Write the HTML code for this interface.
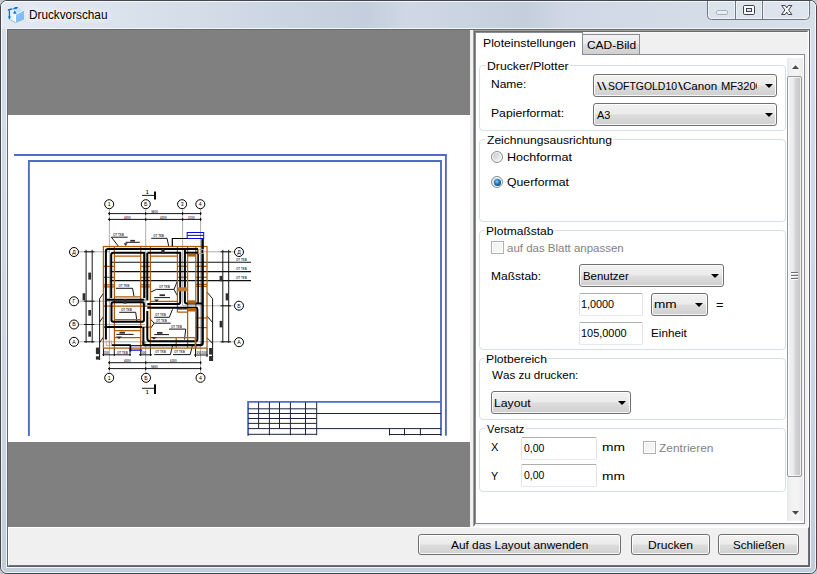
<!DOCTYPE html>
<html lang="de"><head><meta charset="utf-8"><title>Druckvorschau</title>
<style>
html,body{margin:0;padding:0}
body{width:817px;height:574px;overflow:hidden;position:relative;background:#c4c8cc;font:12px "Liberation Sans",sans-serif;color:#000;font-kerning:none}
div,span{box-sizing:border-box}
.a{position:absolute}
.t{position:absolute;white-space:nowrap;line-height:14px;height:14px;transform-origin:0 50%}
#win{left:0;top:0;width:817px;height:574px;border-radius:7px;border:1px solid #43484f;background:linear-gradient(180deg,#d6dfea 0,#d2dce8 120px,#cbd6e2 420px,#c2cdda 574px)}
#tbar{left:1px;top:1px;width:815px;height:28px;border-radius:6px 6px 0 0;background:linear-gradient(90deg,#e4eaf2 0,#dbe3ed 110px,#d3dce7 200px,#cad4e1 300px,#c4cedc 365px,#cfd8e4 405px,#cad4e0 470px,#c5cfdc 525px,#cfd8e4 565px,#d3dce7 700px,#d8e0ea 815px)}
#winhl{left:1px;top:1px;width:815px;height:572px;border-radius:6px;border:1px solid rgba(255,255,255,.75)}
#client{left:6px;top:28px;width:805px;height:540px;background:#f0f0f0;border:1px solid #f2f6fa}
#client2{left:7px;top:29px;width:803px;height:538px;border:1px solid #5c626b;border-top-color:#6a6a6a;border-left-color:#64686e}
#gray{left:8px;top:30px;width:462px;height:497px;background:#808080}
#paper{left:8px;top:115px;width:462px;height:327px;background:#fff}
#panel{left:473px;top:30px;width:336px;height:497px;background:#f0f0f0;border-left:1px solid #a0a0a0;border-top:1px solid #a0a0a0;border-right:1px solid #fff;border-bottom:1px solid #fff}
#panel2{left:474px;top:31px;width:334px;height:495px;border-left:1px solid #696969;border-top:1px solid #696969;border-right:1px solid #f4f4f4;border-bottom:1px solid #f4f4f4}
#tabbg{left:475px;top:32px;width:332px;height:493px;background:#f0f0f0;border-top:1px solid #fafafa}
#pane{left:475px;top:54px;width:330px;height:470px;background:#fff;border:1px solid #898c95}
#tab1{left:475px;top:32px;width:108px;height:23px;background:#fff;border:1px solid #898c95;border-bottom:none}
#tab1b{left:476px;top:54px;width:106px;height:2px;background:#fff}
#tab2{left:583px;top:34px;width:57px;height:20px;border:1px solid #898c95;border-left:none;border-bottom:none;background:linear-gradient(#f2f2f2 0,#ebebeb 49%,#dddddd 50%,#cfcfcf 100%)}
.grp{position:absolute;border:1px solid #d5dfe5;border-radius:4px}
.gl{position:absolute;background:#fff;height:3px}
.combo,.btn{position:absolute;border:1px solid #707070;border-radius:3px;background:linear-gradient(#f2f2f2 0,#ebebeb 48%,#dddddd 52%,#cfcfcf 100%);box-shadow:inset 0 0 0 1px rgba(255,255,255,.85)}
.ar{position:absolute;width:0;height:0;border-left:4px solid transparent;border-right:4px solid transparent;border-top:4px solid #000}
.inp{position:absolute;border-radius:1.5px;border:1px solid #e2e3ea;border-top-color:#abadb3;border-bottom-color:#e3e9ef;background:#fff}
.radio{position:absolute;width:12px;height:12px;border-radius:50%;border:1px solid #8a8b8c;background:linear-gradient(135deg,#c3cad1 10%,#dde1e5 50%,#f6f7f8 90%);box-shadow:inset 0 0 0 1px #fcfcfc}
.cbx{position:absolute;width:13px;height:13px;border:1px solid #b1b1b1;background:linear-gradient(135deg,#efefef,#f9f9f9);box-shadow:inset 0 0 0 1px #fdfdfd}
#sbtrack{left:787px;top:58px;width:16px;height:463px;background:linear-gradient(90deg,#e9e9e9 0,#f3f3f3 30%,#f3f3f3 70%,#eaeaea 100%)}
#sbthumb{left:787px;top:76px;width:15px;height:401px;border:1px solid #979797;border-radius:2px;background:linear-gradient(90deg,#f5f5f5 0,#e9e9eb 45%,#d5d5d8 55%,#c4c4c8 100%);box-shadow:inset 0 0 0 1px rgba(255,255,255,.7)}
#band{left:8px;top:527px;width:801px;height:39px;border-top:1px solid #fff;border-left:1px solid #fff;border-right:1px solid #6c6f74;border-bottom:1px solid #6c6f74}
</style></head><body>
<div id="win" class="a"></div><div id="tbar" class="a"></div><div id="winhl" class="a"></div><div id="client" class="a"></div><div id="client2" class="a"></div><div id="band" class="a"></div>
<div id="gray" class="a"></div><div id="paper" class="a"></div>
<svg class="a" style="left:8px;top:115px" width="462" height="327" viewBox="8 115 462 327" font-family="Liberation Sans, sans-serif"><g fill="none" stroke="#4f6cc9" stroke-width="1.9"><path d="M14 155H445.9V435.8"/><path d="M28.9 436V161H441V435.8"/><path d="M441 401.9H248.1V435.8"/></g><g fill="none" stroke="#1e2440" stroke-width="1"><path d="M248 408.8H316.7"/><path d="M248 413.5H441"/><path d="M248 418.5H316.7"/><path d="M248 423.4H316.7"/><path d="M248 428.6H441"/><path d="M248 434.3H316.7M389.3 434.5H441"/><path d="M258.6 402.2V428.6"/><path d="M269.4 402.2V435.3"/><path d="M279.5 402.2V428.6"/><path d="M290.4 402.2V435.3"/><path d="M305.5 402.2V435.3"/><path d="M316.7 402.2V435.3"/><path d="M389.5 428.6V435.5"/><path d="M404.5 428.6V435.5"/><path d="M420.4 428.6V435.5"/></g><g fill="none" stroke="#8c8c8c" stroke-width="0.7"><path d="M109.4 209V252"/><path d="M145.7 209V252"/><path d="M182.6 209V252"/><path d="M200.6 209V252"/><path d="M109.4 341V373"/><path d="M145.7 341V373"/><path d="M200.6 341V373"/><path d="M145.7 252V306M182.6 252V306M200.6 252V345M109.4 252V345"/><path d="M79 251.8H109.4"/><path d="M79 301.2H109.4"/><path d="M79 324.5H109.4"/><path d="M79 341.8H109.4"/><path d="M109.4 301.2H145M109.4 324.5H145M109.4 341.8H203"/><path d="M200.6 251.8H234.5"/><path d="M200.6 305.8H234.5"/><path d="M200.6 341.8H234.5"/><path d="M182.6 305.8H200.6"/></g><g fill="none" stroke="#0a0a0a" stroke-width="0.95"><path d="M108 213.6H201.5M108 219.4H201.5"/><path d="M108 362.7H201.5M108 368.6H201.5"/><path d="M109.4 212.1V215.1M109.4 217.9V220.9"/><path d="M145.7 212.1V215.1M145.7 217.9V220.9"/><path d="M182.6 212.1V215.1M182.6 217.9V220.9"/><path d="M200.6 212.1V215.1M200.6 217.9V220.9"/><path d="M109.4 361.2V364.2M109.4 367.1V370.1"/><path d="M145.7 361.2V364.2M145.7 367.1V370.1"/><path d="M200.6 361.2V364.2M200.6 367.1V370.1"/><path d="M86.1 249.8V342.8M92.2 249.8V342.8"/><path d="M222.8 249.8V342.8M228.7 249.8V342.8"/><path d="M84 251.8H94.5"/><path d="M84 301.2H94.5"/><path d="M84 324.5H94.5"/><path d="M84 341.8H94.5"/><path d="M220.5 251.8H231"/><path d="M220.5 305.8H231"/><path d="M220.5 341.8H231"/><path d="M110.5 262.3H251" stroke-width="1.05" stroke="#111"/><path d="M110.5 271.6H251" stroke-width="1.05" stroke="#111"/><path d="M110.5 280.6H251" stroke-width="1.05" stroke="#111"/><path d="M99.6 298.7V360M103.5 293.2L99.6 298.7M103.5 316.5L99.6 322M103.5 337L99.6 342.5"/><path d="M212.6 298.7V361M207 292.2L212.6 298.7M207 316L212.6 322.6M207 337.8L212.6 343.3"/><path d="M102.3 354.8H131M103.5 348V356M114.3 348V356M130 348V356M140.7 348V356M150.4 348V356M139 354.8H152"/><path d="M194 355H208M195.5 348V357M207 348V357"/><path d="M111.4 237.2H127.6M111.4 237.2L118.2 246"/><path d="M125.6 242.3H139.7"/><path d="M151.2 238.3H167L168.7 246"/><path d="M119.2 312.3H135.7L137 322"/><path d="M116.4 334.4H133.6"/><path d="M115.9 288.3H132.6L134 296.5"/><path d="M150 292.5L156.3 289.4H174L177.4 281M174 289.4L177.4 295.7"/><path d="M154.2 297.6H170"/><path d="M154.2 317.3H169.3L172.5 309.3"/><path d="M150 318.7L154.2 323.2H170.7M154.2 323.2L150 329.1"/><path d="M169 329.1H185.7L184.5 339.6"/><path d="M154.2 334.6H169"/><path d="M172.5 346L170.4 354.6H154.2M192.3 346L190.2 354.6H173"/></g><g fill="none" stroke="#b25c08" stroke-width="1.25"><rect x="103.4" y="246.5" width="103.6" height="101.6"/><path d="M114.4 246.5V348M140.7 246.5V348M150.4 246.5V348M177.4 246.5V312.2M187.6 246.5V348M195.8 246.5V348"/><path d="M176.2 337.5V348M150.4 337.5H195.8"/><path d="M114.4 256.2H140.7M150.4 256.2H177.4"/><path d="M114.4 296.8H140.7M103.4 306.2H150.4M114.4 319.5H140.7M103.4 327.1H150.4M114.4 330.6H140.7M114.4 337.6H140.7"/><path d="M150.4 301.4H177.4M177.4 312.2H187.6M177.4 309H187.6"/><path d="M103.4 266.3H114.4M140.7 266.3H150.4"/><path d="M103.4 277.3H114.4M140.7 277.3H150.4"/><path d="M103.4 284.9H114.4M140.7 284.9H150.4"/><path d="M103.4 286.8H114.4M140.7 286.8H150.4"/><path d="M195.8 266.3H207"/><path d="M195.8 277.3H207"/><path d="M195.8 284.3H207"/><path d="M195.8 286.3H207"/><path d="M195.8 318H207"/><path d="M195.8 327.6H207"/><path d="M177.4 266.3H187.6"/><path d="M177.4 277.3H187.6"/></g><g fill="none" stroke="#000" stroke-width="2" stroke-linejoin="round"><path d="M198 249.1H108.2Q105.9 249.1 105.9 251.4V339.5"/><path d="M111.7 345.2H130.4V351.5" stroke-width="1.7"/><path d="M111.2 298V255Q111.2 252.8 113.4 252.8H144.2V298"/><path d="M106.5 299.8H144.4"/><rect x="111.5" y="302.3" width="32.4" height="19.4" rx="1.6"/><path d="M104.6 326.9H142"/><path d="M147.3 252.8V300.5" /><path d="M147.3 252.8H180.2V302Q180.2 304.1 178 304.1H147.3"/><path d="M184.9 249.1V301.5Q184.9 303.4 186.7 303.4H202"/><path d="M184.9 252.7H198"/><path d="M147.3 307.7H196Q197.4 307.7 197.4 309V339"/><path d="M143.4 327V341.2M147.3 311V338Q147.3 341.2 150 341.2H195.5Q197.4 341.2 197.4 339"/><path d="M143.4 341.2V346M143.4 345.1H200.5Q202.6 345.1 202.6 343V238.5" stroke-width="2.4"/><path d="M198.1 249.1V303" stroke-width="1.6"/></g><g fill="#b5620c"><rect x="187.6" y="254" width="8.2" height="2.6"/><rect x="187.6" y="300.3" width="8.2" height="3.5"/><rect x="187.6" y="308" width="8.2" height="3.5"/><rect x="177.4" y="287.3" width="10.2" height="4" fill="#c47a2a"/><rect x="194.6" y="337.5" width="1.6" height="10.5"/></g><g fill="none" stroke="#000" stroke-width="1.2"><path d="M172.3 246.5V238.5H203.5"/></g><g fill="none" stroke="#0a0ae0" stroke-width="1"><rect x="187.2" y="232.5" width="16.5" height="6"/><path d="M187.2 235.4H203.7"/><path d="M130.4 345.6H142.2M130.4 350.1H142.2" stroke-width="1.4"/></g><g fill="none" stroke="#e89090" stroke-width="0.9"><rect x="198.4" y="249.3" width="5" height="4.2"/><rect x="106.3" y="341.2" width="5.3" height="4.2"/></g><g fill="#2e2e2e"><rect x="88.3" y="272.6" width="2.7" height="7"/><rect x="82.6" y="293.3" width="2.7" height="7.1"/><rect x="88.3" y="310" width="2.7" height="5.7"/><rect x="88.3" y="331.3" width="2.7" height="5.4"/><rect x="95.9" y="347.6" width="3.2" height="6.5"/><rect x="95.9" y="356.3" width="3.2" height="3.3"/><rect x="219.6" y="275.9" width="2.7" height="5.4"/><rect x="225.7" y="293.3" width="2.7" height="7.1"/><rect x="219.6" y="320.9" width="2.7" height="6.5"/><rect x="209.1" y="348" width="2.9" height="6.6"/><rect x="209.1" y="356" width="2.9" height="5"/><rect x="161.3" y="249.2" width="3.3" height="4.8"/><rect x="123.4" y="299.2" width="3.4" height="4.4"/><rect x="130.3" y="239.9" width="4.7" height="1.7"/><rect x="119.5" y="331.8" width="5.5" height="1.8"/><rect x="159.5" y="294.3" width="5.5" height="1.8"/><rect x="157" y="332" width="5.5" height="1.8"/><path d="M123.6 243.2L127.6 243.2L125.6 246Z"/><path d="M116 336.4H122L119 339Z"/><path d="M154 299.5H159L156.5 302Z"/><path d="M151 337H157L154 339.5Z"/></g><g stroke="#000" fill="none"><path d="M142 195.4H154" stroke-width="0.9"/><path d="M155 191.4V199.6" stroke-width="1.9"/><path d="M142 388.3H154" stroke-width="0.9"/><path d="M155 384.2V394" stroke-width="1.9"/></g><g fill="#fff" stroke="#000" stroke-width="1"><circle cx="109.2" cy="204.2" r="4.5"/><circle cx="145.8" cy="204.2" r="4.5"/><circle cx="182.1" cy="204.2" r="4.5"/><circle cx="200.3" cy="204.2" r="4.5"/><circle cx="109.2" cy="377.8" r="4.5"/><circle cx="146" cy="377.8" r="4.5"/><circle cx="200.5" cy="377.8" r="4.5"/><circle cx="74" cy="252" r="4.5"/><circle cx="74" cy="301.3" r="4.5"/><circle cx="74" cy="324.5" r="4.5"/><circle cx="74" cy="341.8" r="4.5"/><circle cx="239" cy="252" r="4.5"/><circle cx="239" cy="305.7" r="4.5"/><circle cx="239" cy="342.2" r="4.5"/></g><g font-size="5.2" text-anchor="middle" fill="#000"><text x="109.2" y="206.1">1</text><text x="145.8" y="206.1">Б</text><text x="182.1" y="206.1">3</text><text x="200.3" y="206.1">4</text><text x="109.2" y="379.7">1</text><text x="146" y="379.7">Б</text><text x="200.5" y="379.7">4</text><text x="74" y="253.9">Д</text><text x="74" y="303.2">Г</text><text x="74" y="326.4">В</text><text x="74" y="343.7">А</text><text x="239" y="253.9">Д</text><text x="239" y="307.59999999999997">Б</text><text x="239" y="344.09999999999997">А</text><text x="147.2" y="193.6" font-size="4.5" font-weight="bold">1</text><text x="147.2" y="393.8" font-size="4.5" font-weight="bold">1</text></g><g font-size="3" fill="#4a4458" font-weight="bold"><text x="113" y="235.6">ОТ ТКВ</text><text x="153.2" y="236.6">ОТ ТКВ</text><text x="121" y="310.5">ОТ ТКВ</text><text x="118.5" y="286.6">ОТ ТКВ</text><text x="159" y="288">ОТ ТКВ</text><text x="155" y="315.8">ОТ ТКВ</text><text x="156" y="321.8">ОТ ТКВ</text><text x="171" y="327.8">ОТ ТКВ</text><text x="155" y="353">ОТ ТКВ</text><text x="174" y="353">ОТ ТКВ</text><text x="236" y="261">ОТ ТКВ</text><text x="236" y="270.3">ОТ ТКВ</text><text x="236" y="279.4">ОТ ТКВ</text><text x="151.2" y="213.2">9600</text><text x="124" y="219">4200</text><text x="160" y="219">4200</text><text x="188" y="219">2100</text><text x="124" y="362.3">4200</text><text x="170" y="362.3">6300</text><text x="151" y="368.2">9600</text><text x="104" y="353.5">500</text><text x="117" y="353.5">ОТ ТКВ</text><text x="141" y="353.5">500</text><text x="196.5" y="353.5">500</text><text x="202" y="353.5">500</text></g></svg>
<div id="panel" class="a"></div><div id="panel2" class="a"></div>
<div id="tabbg" class="a"></div><div id="pane" class="a"></div><div id="tab1" class="a"></div><div id="tab1b" class="a"></div><div id="tab2" class="a"></div>
<div id="sbtrack" class="a"></div><div id="sbthumb" class="a"></div>
<svg class="a" style="left:787px;top:58px" width="16" height="463" viewBox="0 0 16 463"><path d="M5 11L8.5 7.2L12 11Z" fill="#4a4a4a"/><path d="M5 453L12 453L8.5 456.8Z" fill="#4a4a4a"/><g stroke="#6e6e6e" stroke-width="1"><path d="M4 214.5H11M4 217.5H11M4 220.5H11"/></g><g stroke="#fafafa" stroke-width="1"><path d="M4 215.5H11M4 218.5H11M4 221.5H11"/></g></svg>
<svg class="a" style="left:700px;top:0" width="117" height="26" viewBox="0 0 117 26">
<path d="M7.5 1V15.5Q7.5 19.5 11.5 19.5H105.5Q109.5 19.5 109.5 15.5V1" fill="rgba(255,255,255,.18)" stroke="#6f7783" stroke-width="1"/>
<path d="M8.5 1.5V15.5Q8.5 18.5 11.5 18.5H105.5Q108.5 18.5 108.5 15.5V1.5" fill="none" stroke="rgba(255,255,255,.55)" stroke-width="1"/>
<path d="M35.5 1V19M62.5 1V19" stroke="#6f7783" stroke-width="1"/>
<path d="M36.5 2V18M63.5 2V18M34.5 2V18M61.5 2V18" stroke="rgba(255,255,255,.5)" stroke-width="1"/>
<rect x="16.5" y="10.5" width="11" height="4" rx="1" fill="#e9eef5" stroke="#a9afb9"/>
<rect x="43.5" y="5.5" width="11" height="9" rx="1.2" fill="#fbfbfb" stroke="#3f4254"/>
<rect x="46.5" y="8.5" width="5" height="3" fill="#dbe3ee" stroke="#3f4254"/>
<path d="M81.6 5.5H85.2L86.75 7.9L88.3 5.5H91.9L88.6 10L91.9 14.5H88.3L86.75 12.1L85.2 14.5H81.6L84.9 10Z" fill="#f6f6f4" stroke="#3f4254" stroke-width="1" stroke-linejoin="round"/>
</svg>
<svg class="a" style="left:6px;top:4px" width="22" height="22" viewBox="6 4 22 22">
<defs><linearGradient id="cl" x1="0" y1="0" x2="1" y2="0"><stop offset="0" stop-color="#d9ecff"/><stop offset="1" stop-color="#ffffff"/></linearGradient>
<linearGradient id="cr" x1="0" y1="0" x2="1" y2="1"><stop offset="0" stop-color="#8fcaff"/><stop offset="1" stop-color="#6ab6fb"/></linearGradient></defs>
<path d="M10.3 11L17.8 7.4L24 10.2L15.6 14.5Z" fill="#dff0ff"/>
<path d="M17.8 7.4L24 10.2L15.6 14.5L14.6 13.6Z" fill="#c2e1ff"/>
<path d="M10.3 11L15.6 14.5V22.3L10.3 19.6Z" fill="url(#cl)"/>
<path d="M15.6 14.5L24 10.2V18.8L15.6 22.3Z" fill="url(#cr)"/>
<path d="M15.6 14.5L24 10.2" stroke="#f4faff" stroke-width="0.9"/>
<path d="M15.5 14.5V22.2" stroke="#ffffff" stroke-width="0.9"/>
<path d="M10.3 19.9L15.6 22.6L24 19.1" stroke="#93a3b6" stroke-width="0.7" fill="none"/>
<path d="M9.4 10.4V17" stroke="#0a6ed1" stroke-width="1.2"/>
<path d="M7.9 16.4H10.9L9.4 19.8Z" fill="#0a6ed1"/>
<path d="M8.3 10.8Q8.3 9.6 9.6 9.5L12.4 8.9M13.4 8.7L15.5 8.3" stroke="#0a6ed1" stroke-width="1.4" fill="none"/>
<path d="M14.6 6.9L18.2 7L15.9 9.7Z" fill="#0a6ed1"/>
<path d="M13 13.5L14.7 10.6L16.6 13.8Z" fill="#0a6ed1"/>
</svg>
<div class="t" style="left:29.34px;top:8.00px;transform:scaleX(0.9802);text-shadow:0 0 6px #fff,0 0 9px #fff,0 0 12px rgba(255,255,255,.9);">Druckvorschau</div>
<div class="t" style="left:482.50px;top:37.00px;transform:scaleX(1.0605);font-size:11.5px;line-height:12px;height:12px;">Ploteinstellungen</div>
<div class="t" style="left:587.19px;top:38.60px;transform:scaleX(1.0378);font-size:11.5px;line-height:12px;height:12px;">CAD-Bild</div>
<div class="grp" style="left:479px;top:65px;width:307px;height:66px"></div>
<div class="gl" style="left:485.5px;top:64px;width:84.29999999999995px"></div>
<div class="t" style="left:486.50px;top:60.00px;transform:scaleX(1.0628);font-size:11.5px;line-height:12px;height:12px;">Drucker/Plotter</div>
<div class="grp" style="left:479px;top:139px;width:307px;height:83px"></div>
<div class="gl" style="left:485.3px;top:138px;width:127.80000000000001px"></div>
<div class="t" style="left:486.92px;top:134.00px;transform:scaleX(1.0509);font-size:11.5px;line-height:12px;height:12px;">Zeichnungsausrichtung</div>
<div class="grp" style="left:479px;top:230px;width:307px;height:120px"></div>
<div class="gl" style="left:485.3px;top:229px;width:69.99999999999994px"></div>
<div class="t" style="left:486.31px;top:225.00px;transform:scaleX(1.0455);font-size:11.5px;line-height:12px;height:12px;">Plotmaßstab</div>
<div class="grp" style="left:479px;top:358px;width:307px;height:62px"></div>
<div class="gl" style="left:485.3px;top:357px;width:63.19999999999999px"></div>
<div class="t" style="left:486.30px;top:352.50px;transform:scaleX(1.0601);font-size:11.5px;line-height:12px;height:12px;">Plotbereich</div>
<div class="grp" style="left:479px;top:428px;width:307px;height:64px"></div>
<div class="gl" style="left:485.3px;top:427px;width:40.69999999999999px"></div>
<div class="t" style="left:487.25px;top:422.50px;transform:scaleX(0.9566);font-size:11.5px;line-height:12px;height:12px;">Versatz</div>
<div class="t" style="left:490.61px;top:78.00px;transform:scaleX(1.0446);font-size:11.5px;line-height:12px;height:12px;">Name:</div>
<div class="t" style="left:490.60px;top:107.00px;transform:scaleX(1.0592);font-size:11.5px;line-height:12px;height:12px;">Papierformat:</div>
<div class="combo" style="left:593px;top:74px;width:184px;height:23px"></div><div class="ar" style="left:765px;top:84px"></div>
<div class="combo" style="left:593px;top:103px;width:184px;height:23px"></div><div class="ar" style="left:765px;top:113px"></div>
<div class="a" style="left:596px;top:76px;width:161px;height:19px;overflow:hidden">
<div class="t" style="left:1.20px;top:4.00px;transform:scaleX(1.4710);font-size:11.5px;line-height:12px;height:12px;">\\</div>
<div class="t" style="left:11.73px;top:4.00px;transform:scaleX(0.9071);font-size:11.5px;line-height:12px;height:12px;">SOFTGOLD10</div>
<div class="t" style="left:81.70px;top:4.00px;transform:scaleX(1.5023);font-size:11.5px;line-height:12px;height:12px;">\</div>
<div class="t" style="left:87.01px;top:4.00px;transform:scaleX(1.0075);font-size:11.5px;line-height:12px;height:12px;">Canon</div>
<div class="t" style="left:125.08px;top:4.00px;transform:scaleX(0.9707);font-size:11.5px;line-height:12px;height:12px;">MF3200</div>
</div>
<div class="t" style="left:597.18px;top:109.00px;transform:scaleX(0.9455);font-size:11.5px;line-height:12px;height:12px;">A3</div>
<div class="radio" style="left:491px;top:151px"></div><div class="radio" style="left:491px;top:176px"></div>
<div class="a" style="left:493.5px;top:178.5px;width:7px;height:7px;border-radius:50%;background:radial-gradient(circle at 42% 38%,#8fd6f7 0,#2b93d6 30%,#15568f 62%,#0f2f55 100%)"></div>
<div class="t" style="left:506.67px;top:151.00px;transform:scaleX(1.0923);font-size:11.5px;line-height:12px;height:12px;">Hochformat</div>
<div class="t" style="left:507.12px;top:176.00px;transform:scaleX(1.0656);font-size:11.5px;line-height:12px;height:12px;">Querformat</div>
<div class="cbx" style="left:491px;top:241px"></div>
<div class="t" style="left:507.21px;top:241.50px;transform:scaleX(0.9977);font-size:11.5px;line-height:12px;height:12px;color:#838383;">auf das Blatt anpassen</div>
<div class="t" style="left:490.61px;top:269.50px;transform:scaleX(1.0449);font-size:11.5px;line-height:12px;height:12px;">Maßstab:</div>
<div class="combo" style="left:579px;top:264px;width:145px;height:23px"></div><div class="ar" style="left:711px;top:274px"></div>
<div class="t" style="left:583.06px;top:269.50px;transform:scaleX(0.9935);font-size:11.5px;line-height:12px;height:12px;">Benutzer</div>
<div class="inp" style="left:579px;top:293px;width:64px;height:23px"></div>
<div class="t" style="left:581.37px;top:298.00px;transform:scaleX(0.9424);font-size:11.5px;line-height:12px;height:12px;">1,0000</div>
<div class="combo" style="left:651px;top:293px;width:57px;height:23px"></div><div class="ar" style="left:695px;top:303px"></div>
<div class="t" style="left:654.40px;top:298.00px;transform:scaleX(1.1850);font-size:11.5px;line-height:12px;height:12px;">mm</div>
<div class="t" style="left:715.98px;top:299.00px;transform:scaleX(1.1097);font-size:11.5px;line-height:12px;height:12px;">=</div>
<div class="inp" style="left:579px;top:322px;width:64px;height:23px"></div>
<div class="t" style="left:581.17px;top:326.50px;transform:scaleX(0.9498);font-size:11.5px;line-height:12px;height:12px;">105,0000</div>
<div class="t" style="left:651.34px;top:326.50px;transform:scaleX(1.0166);font-size:11.5px;line-height:12px;height:12px;">Einheit</div>
<div class="t" style="left:491.55px;top:369.00px;transform:scaleX(1.0078);font-size:11.5px;line-height:12px;height:12px;">Was zu drucken:</div>
<div class="combo" style="left:491px;top:391px;width:140px;height:23px"></div><div class="ar" style="left:618px;top:401px"></div>
<div class="t" style="left:494.20px;top:396.50px;transform:scaleX(1.0627);font-size:11.5px;line-height:12px;height:12px;">Layout</div>
<div class="t" style="left:491.35px;top:440.50px;transform:scaleX(0.9623);font-size:11.5px;line-height:12px;height:12px;">X</div>
<div class="inp" style="left:521px;top:437px;width:76px;height:23px"></div>
<div class="t" style="left:523.59px;top:441.50px;transform:scaleX(0.9077);font-size:11.5px;line-height:12px;height:12px;">0,00</div>
<div class="t" style="left:602.39px;top:441.00px;transform:scaleX(1.1963);font-size:11.5px;line-height:12px;height:12px;">mm</div>
<div class="cbx" style="left:643px;top:441px"></div>
<div class="t" style="left:658.72px;top:442.00px;transform:scaleX(1.0390);font-size:11.5px;line-height:12px;height:12px;color:#838383;">Zentrieren</div>
<div class="t" style="left:491.36px;top:469.50px;transform:scaleX(0.9351);font-size:11.5px;line-height:12px;height:12px;">Y</div>
<div class="inp" style="left:521px;top:464px;width:76px;height:23px"></div>
<div class="t" style="left:523.59px;top:468.50px;transform:scaleX(0.9077);font-size:11.5px;line-height:12px;height:12px;">0,00</div>
<div class="t" style="left:602.39px;top:469.50px;transform:scaleX(1.1963);font-size:11.5px;line-height:12px;height:12px;">mm</div>
<div class="btn" style="left:418px;top:534px;width:203px;height:21px"></div>
<div class="t" style="left:451.38px;top:539.00px;transform:scaleX(1.0324);font-size:11.5px;line-height:12px;height:12px;">Auf das Layout anwenden</div>
<div class="btn" style="left:631px;top:534px;width:79px;height:21px"></div>
<div class="t" style="left:647.61px;top:539.00px;transform:scaleX(1.0503);font-size:11.5px;line-height:12px;height:12px;">Drucken</div>
<div class="btn" style="left:718px;top:534px;width:81px;height:21px"></div>
<div class="t" style="left:732.67px;top:539.00px;transform:scaleX(1.0106);font-size:11.5px;line-height:12px;height:12px;">Schließen</div>
</body></html>
